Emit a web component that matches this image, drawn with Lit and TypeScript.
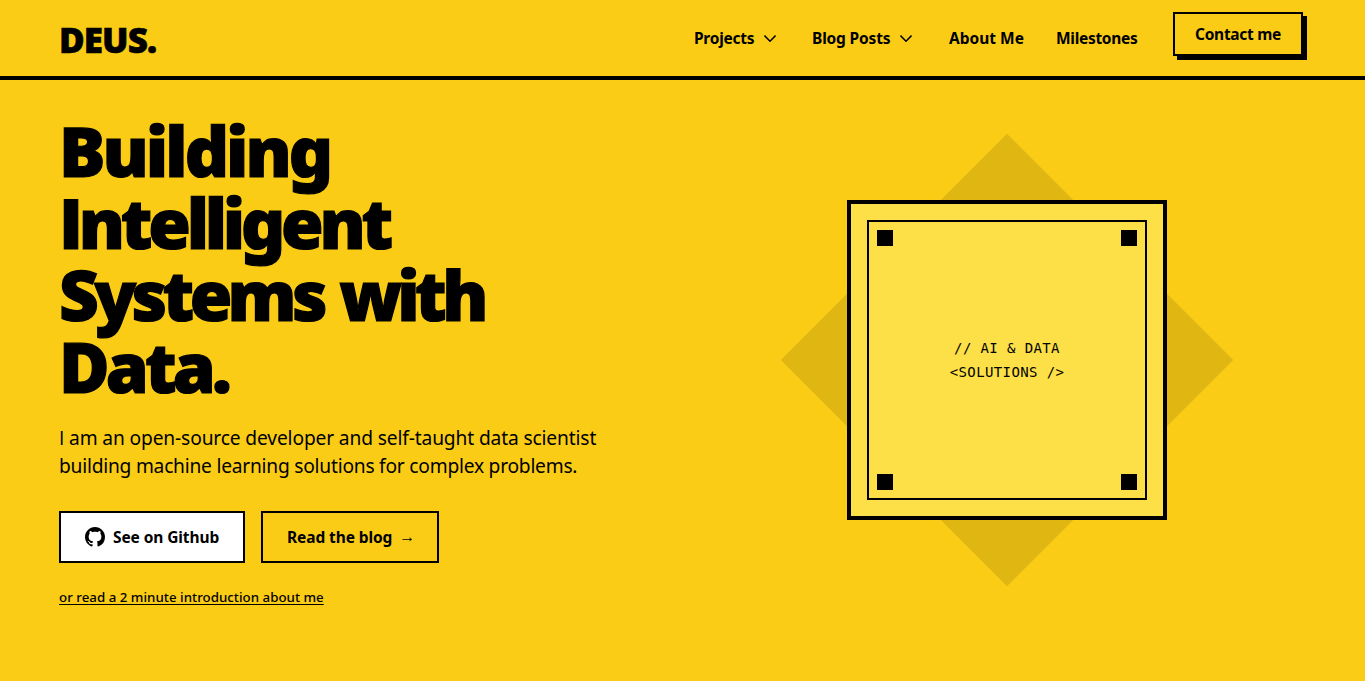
import { LitElement, html, css } from "lit";
import { customElement } from "lit/decorators.js";

@customElement("app-root")
export class AppRoot extends LitElement {
  static styles = css`
    * { box-sizing: border-box; margin: 0; }
    :host {
      display: flex;
      flex-direction: column;
      height: 681px;
      overflow: hidden;
      background: #facc15;
      color: #000;
      font-family: "Noto Sans", "Open Sans", sans-serif;
    }
    a { color: inherit; text-decoration: none; white-space: nowrap; }
    header {
      display: flex;
      align-items: flex-start;
      flex: none;
      height: 80px;
      padding: 0 62px 0 59px;
      border-bottom: 4px solid #000;
    }
    .logo {
      flex: 1;
      font-size: 35px;
      font-weight: 900;
      line-height: 40px;
      letter-spacing: -0.9px;
      padding-top: 20px;
      -webkit-text-stroke: 0.6px #000;
    }
    nav { display: flex; align-items: flex-start; }
    .link {
      display: flex;
      align-items: center;
      height: 24px;
      margin-top: 26px;
      font-size: 15.5px;
      font-weight: 700;
    }
    .projects { width: 118px; letter-spacing: -0.26px; }
    .blog { width: 137px; letter-spacing: -0.17px; }
    .about { width: 107px; }
    .miles { width: 117px; letter-spacing: -0.3px; }
    .chev { width: 12px; height: 7px; margin-left: 10px; }
    .contact {
      display: flex;
      align-items: center;
      justify-content: center;
      width: 130px;
      height: 44px;
      margin-top: 12px;
      border: 2px solid #000;
      box-shadow: 4px 4px 0 #000;
      font-size: 15.5px;
      font-weight: 700;
      letter-spacing: -0.3px;
    }
    main {
      flex: 1;
      display: grid;
      grid-template-columns: 590px 1fr;
      column-gap: 65px;
      padding: 34px 65px 0 59px;
    }
    h1 { font-size: 69px; line-height: 72px; font-weight: 900; -webkit-text-stroke: 1.2px #000; }
    h1 span, .lead span { display: block; white-space: nowrap; }
    h1 i, .lead i { font-family: "Open Sans", sans-serif; font-style: normal; }
    .l1 { letter-spacing: -2.95px; }
    .l2 { letter-spacing: -4.25px; }
    .l3 { letter-spacing: -4.67px; word-spacing: 3px; }
    .l4 { letter-spacing: -3.85px; }
    .lead { margin-top: 22px; font-size: 19.2px; line-height: 28px; }
    .p1 { letter-spacing: -0.14px; }
    .p2 { letter-spacing: -0.23px; }
    .actions { display: flex; gap: 16px; margin-top: 31px; }
    .btn {
      display: flex;
      align-items: center;
      height: 52px;
      border: 2px solid #000;
      padding-left: 24px;
      font-size: 15.5px;
      font-weight: 700;
      letter-spacing: -0.1px;
    }
    .github { width: 186px; background: #fff; gap: 8px; }
    .read { width: 178px; gap: 7px; }
    .arrow { font: 400 16px "Liberation Sans", sans-serif; }
    .intro {
      display: inline-block;
      margin-top: 24px;
      font-size: 13.3px;
      font-weight: 500;
      line-height: 20px;
      letter-spacing: 0.02px;
      text-decoration: underline;
      text-underline-offset: 2px;
      text-decoration-thickness: 1px;
    }
    .art { display: grid; justify-items: center; align-items: start; padding-top: 86px; }
    .diamond, .card { grid-area: 1 / 1; width: 320px; height: 320px; }
    .diamond { background: rgba(0, 0, 0, 0.1); transform: rotate(45deg); }
    .card { z-index: 1; background: #fde047; border: 4px solid #000; padding: 16px; }
    .frame {
      height: 280px;
      border: 2px solid #000;
      padding: 8px;
      display: grid;
      grid-template-columns: 16px 1fr 16px;
      grid-template-rows: 16px 1fr 16px;
    }
    .dot { background: #000; }
    .code {
      grid-column: 1 / 4;
      align-self: center;
      text-align: center;
      font: 14px/24px "DejaVu Sans Mono", monospace;
      letter-spacing: 0.39px;
    }
    .c2 { grid-column: 3; }
  `;

  private chevron() {
    return html`<svg class="chev" viewBox="0 0 12 7" fill="none" stroke="#000" stroke-width="1.5"><path d="M.5 .6 6 6.2 11.5 .6" /></svg>`;
  }

  render() {
    return html`
      <header>
        <a class="logo">DEUS.</a>
        <nav>
          <a class="link projects">Projects${this.chevron()}</a>
          <a class="link blog">Blog Posts${this.chevron()}</a>
          <a class="link about">About Me</a>
          <a class="link miles">Milestones</a>
          <a class="contact">Contact me</a>
        </nav>
      </header>
      <main>
        <section>
          <h1>
            <span class="l1">Building</span>
            <span class="l2"><i>I</i>ntelligent</span>
            <span class="l3">Systems with</span>
            <span class="l4">Data.</span>
          </h1>
          <p class="lead">
            <span class="p1"><i>I</i> am an open-source developer and self-taught data scientist</span>
            <span class="p2">building machine learning solutions for complex problems.</span>
          </p>
          <div class="actions">
            <a class="btn github">
              <svg width="20" height="20" viewBox="0 0 16 16"><path d="M8 0C3.58 0 0 3.58 0 8c0 3.54 2.29 6.53 5.47 7.59.4.07.55-.17.55-.38 0-.19-.01-.82-.01-1.49-2.01.37-2.53-.49-2.69-.94-.09-.23-.48-.94-.82-1.13-.28-.15-.68-.52-.01-.53.63-.01 1.08.58 1.23.82.72 1.21 1.87.87 2.33.66.07-.52.28-.87.51-1.07-1.78-.2-3.64-.89-3.64-3.95 0-.87.31-1.59.82-2.15-.08-.2-.36-1.02.08-2.12 0 0 .67-.21 2.2.82.64-.18 1.32-.27 2-.27s1.36.09 2 .27c1.53-1.04 2.2-.82 2.2-.82.44 1.1.16 1.92.08 2.12.51.56.82 1.27.82 2.15 0 3.07-1.87 3.75-3.65 3.95.29.25.54.73.54 1.48 0 1.07-.01 1.93-.01 2.2 0 .21.15.46.55.38A8.01 8.01 0 0 0 16 8c0-4.42-3.58-8-8-8z" /></svg>
              See on Github
            </a>
            <a class="btn read">Read the blog <span class="arrow">→</span></a>
          </div>
          <a class="intro">or read a 2 minute introduction about me</a>
        </section>
        <section class="art">
          <div class="diamond"></div>
          <div class="card">
            <div class="frame">
              <div class="dot"></div>
              <div class="dot c2"></div>
              <div class="code">// AI &amp; DATA<br />&lt;SOLUTIONS /&gt;</div>
              <div class="dot"></div>
              <div class="dot c2"></div>
            </div>
          </div>
        </section>
      </main>
    `;
  }
}
